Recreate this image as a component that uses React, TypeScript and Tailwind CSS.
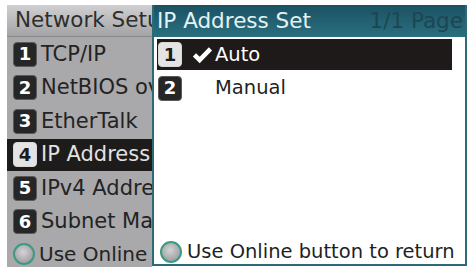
const FONT = "font-['DejaVu_Sans',Verdana,sans-serif]";

const leftItems = [
  { n: "1", label: "TCP/IP" },
  { n: "2", label: "NetBIOS over TCP" },
  { n: "3", label: "EtherTalk" },
  { n: "4", label: "IP Address Set", selected: true },
  { n: "5", label: "IPv4 Address" },
  { n: "6", label: "Subnet Mask" },
];

function Badge({ n, light }: { n: string; light?: boolean }) {
  return (
    <span
      className={
        "flex h-[25px] w-[24px] shrink-0 items-center justify-center rounded-[4px] border text-[18px] font-bold leading-none " +
        (light
          ? "border-[#d8d8d8] bg-[#e4e4e4] text-[#1c1c1c]"
          : "border-[#5a5a5a] bg-[#262626] text-white")
      }
    >
      {n}
    </span>
  );
}

function OnlineDot() {
  return (
    <span className="h-[22px] w-[22px] shrink-0 rounded-full border-2 border-[#3d9a82] bg-[radial-gradient(circle_at_45%_40%,#d4d4d6,#8e8e92)]" />
  );
}

export default function App() {
  return (
    <div className={"h-[267px] w-[470px] overflow-hidden bg-white pl-[7px] pt-[5px] " + FONT}>
      <div className="flex h-[262px]">
        {/* Left settings menu (behind) */}
        <div className="flex w-[145px] shrink-0 flex-col overflow-hidden bg-[#a9a8ab] text-[21px] text-[#232323]">
          <div className="flex h-[32px] shrink-0 items-center overflow-hidden whitespace-nowrap border-b border-[#8a8a8c] bg-[linear-gradient(#d0d0d2,#a4a4a6)] pl-[8px] text-[21.5px] text-[#2e2e2e]">
            Network Setup
          </div>
          {leftItems.map((it) => (
            <div
              key={it.n}
              className={
                "mt-[1px] flex h-[32.5px] shrink-0 items-center gap-[4px] overflow-hidden whitespace-nowrap pl-[6px] " +
                (it.selected ? "bg-[#1e1b1b] text-[#e2e2e2]" : "")
              }
            >
              <Badge n={it.n} light={it.selected} />
              <span>{it.label}</span>
            </div>
          ))}
          <div className="mt-[1px] flex h-[30px] shrink-0 items-center gap-[4px] overflow-hidden whitespace-nowrap pl-[6px] text-[20px]">
            <OnlineDot />
            <span>Use Online button to return</span>
          </div>
        </div>

        {/* IP Address Set popup */}
        <div className="flex h-[261px] w-[315px] shrink-0 flex-col border-2 border-t-0 border-[#2d6a77] bg-white text-[19.5px] text-[#1f1f1f]">
          <div className="flex h-[32px] shrink-0 items-center justify-between whitespace-nowrap bg-[linear-gradient(#1b5262,#2a6f7f)] pl-[3px] pr-[2px] text-[21.5px]">
            <span className="text-[#e4f2f4]">IP Address Set</span>
            <span className="text-[#1c4653]">1/1 Page</span>
          </div>
          <div className="flex flex-1 flex-col pl-[3px] pr-[13px] pt-[2px]">
            <div className="flex h-[31px] items-center bg-[#1e1a1a] pl-[1px] text-white">
              <Badge n="1" light />
              <svg viewBox="0 0 24 24" className="ml-[8px] h-[22px] w-[24px]" fill="white">
                <path d="M2 13.5 L5.5 10 L9.5 14 L19.5 3.5 L23 7 L9.5 21 Z" />
              </svg>
              <span className="ml-[1px]">Auto</span>
            </div>
            <div className="mt-[2px] flex h-[32px] items-center pl-[1px]">
              <Badge n="2" />
              <span className="ml-[33px]">Manual</span>
            </div>
          </div>
          <div className="flex h-[24px] shrink-0 items-center gap-[5px] whitespace-nowrap pl-[6px]">
            <OnlineDot />
            <span>Use Online button to return</span>
          </div>
        </div>
      </div>
    </div>
  );
}
